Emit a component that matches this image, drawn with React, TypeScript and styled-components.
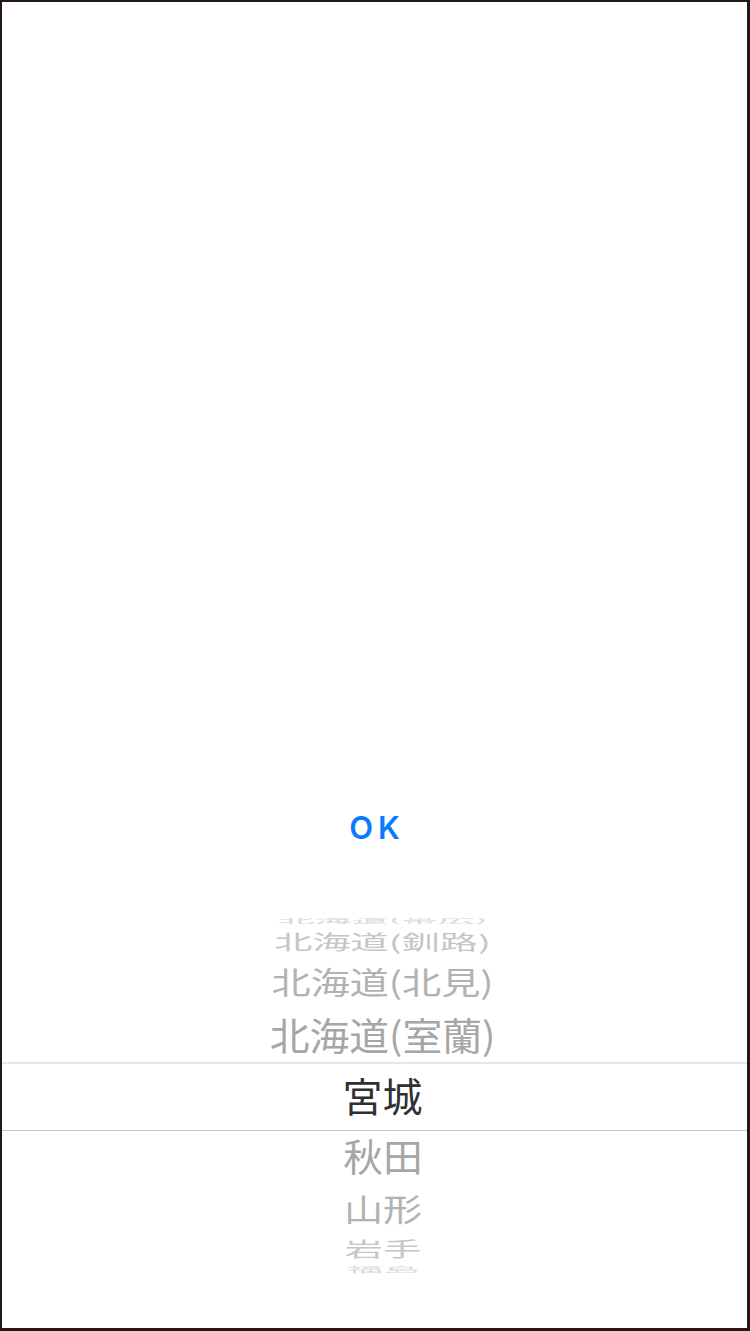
import React from 'react'
import styled, { createGlobalStyle } from 'styled-components'

const GlobalStyle = createGlobalStyle`
    html, body {
        margin: 0;
        padding: 0;
        background: #ffffff;
    }
    * {
        box-sizing: border-box;
    }
`;

// wheel geometry (cylinder seen from the front)
const RADIUS = 180;
const STEP_DEG = 20;
const PERSPECTIVE = 1850;

const PREFECTURES = [
    '北海道(帯広)',
    '北海道(釧路)',
    '北海道(北見)',
    '北海道(室蘭)',
    '宮城',
    '秋田',
    '山形',
    '岩手',
    '福島',
];
const SELECTED_INDEX = 4;

const Frame = styled.div`
    width: 750px;
    height: 1331px;
    display: flex;
    flex-direction: column;
    border-style: solid;
    border-color: #231815;
    border-width: 2px 3px 3px 2px;
    background: #ffffff;
    padding-bottom: 53px;
`;

const Spacer = styled.div`
    flex: 1;
`;

const Toolbar = styled.div`
    height: 88px;
    margin-bottom: 47px;
    display: flex;
    align-items: center;
    justify-content: center;
`;

const OkButton = styled.button`
    border: none;
    background: transparent;
    padding: 0 0 0 5px;
    margin: 0;
    font-family: Inter, "Liberation Sans", sans-serif;
    font-size: 31px;
    font-weight: 600;
    letter-spacing: 5px;
    color: #0a7bff;
    cursor: pointer;
`;

const Wheel = styled.div`
    position: relative;
    height: 357px;
    overflow: hidden;
    display: flex;
    flex-direction: column;
    justify-content: center;
`;

const SelectionBand = styled.div`
    position: absolute;
    left: 0;
    right: 0;
    top: calc(50% - 34.5px);
    height: 69px;
    border-top: 2px solid #e6e6e6;
    border-bottom: 1px solid #c8c8c8;
    pointer-events: none;
`;

const Row = styled.div`
    flex-shrink: 0;
    display: flex;
    align-items: center;
    justify-content: center;
    padding-left: 16px;
`;

const SHADES = ['#303030', '#a6a6a6', '#b2b2b2', '#c6c6c6', '#dadada'];

const Label = styled.span<{ $distance: number }>`
    display: block;
    font-family: "Noto Sans CJK JP", "Noto Sans", sans-serif;
    font-size: 40px;
    line-height: 1;
    white-space: nowrap;
    color: ${p => SHADES[Math.min(p.$distance, SHADES.length - 1)]};
`;

function geometry(offset: number) {
    const step = (STEP_DEG * Math.PI) / 180;
    const theta = Math.abs(offset) * step;
    const height = RADIUS * (Math.sin(Math.min(theta + step / 2, Math.PI / 2)) - Math.sin(theta - step / 2));
    const scaleY = Math.cos(theta);
    const scaleX = PERSPECTIVE / (PERSPECTIVE + RADIUS * (1 - Math.cos(theta)));
    return { height, scaleX, scaleY };
}

const Picker: React.FC = () => {
    return (
        <Wheel>
            {PREFECTURES.map((name, i) => {
                const offset = i - SELECTED_INDEX;
                const g = geometry(offset);
                return (
                    <Row key={name} style={{ height: g.height }}>
                        <Label
                            $distance={Math.abs(offset)}
                            style={{ transform: `translateY(-2px) scale(${g.scaleX}, ${g.scaleY})` }}
                        >
                            {name}
                        </Label>
                    </Row>
                );
            })}
            <SelectionBand />
        </Wheel>
    );
};

const App: React.FC = () => {
    return (
        <>
            <GlobalStyle />
            <Frame>
                <Spacer />
                <Toolbar>
                    <OkButton>OK</OkButton>
                </Toolbar>
                <Picker />
            </Frame>
        </>
    );
};

export default App
